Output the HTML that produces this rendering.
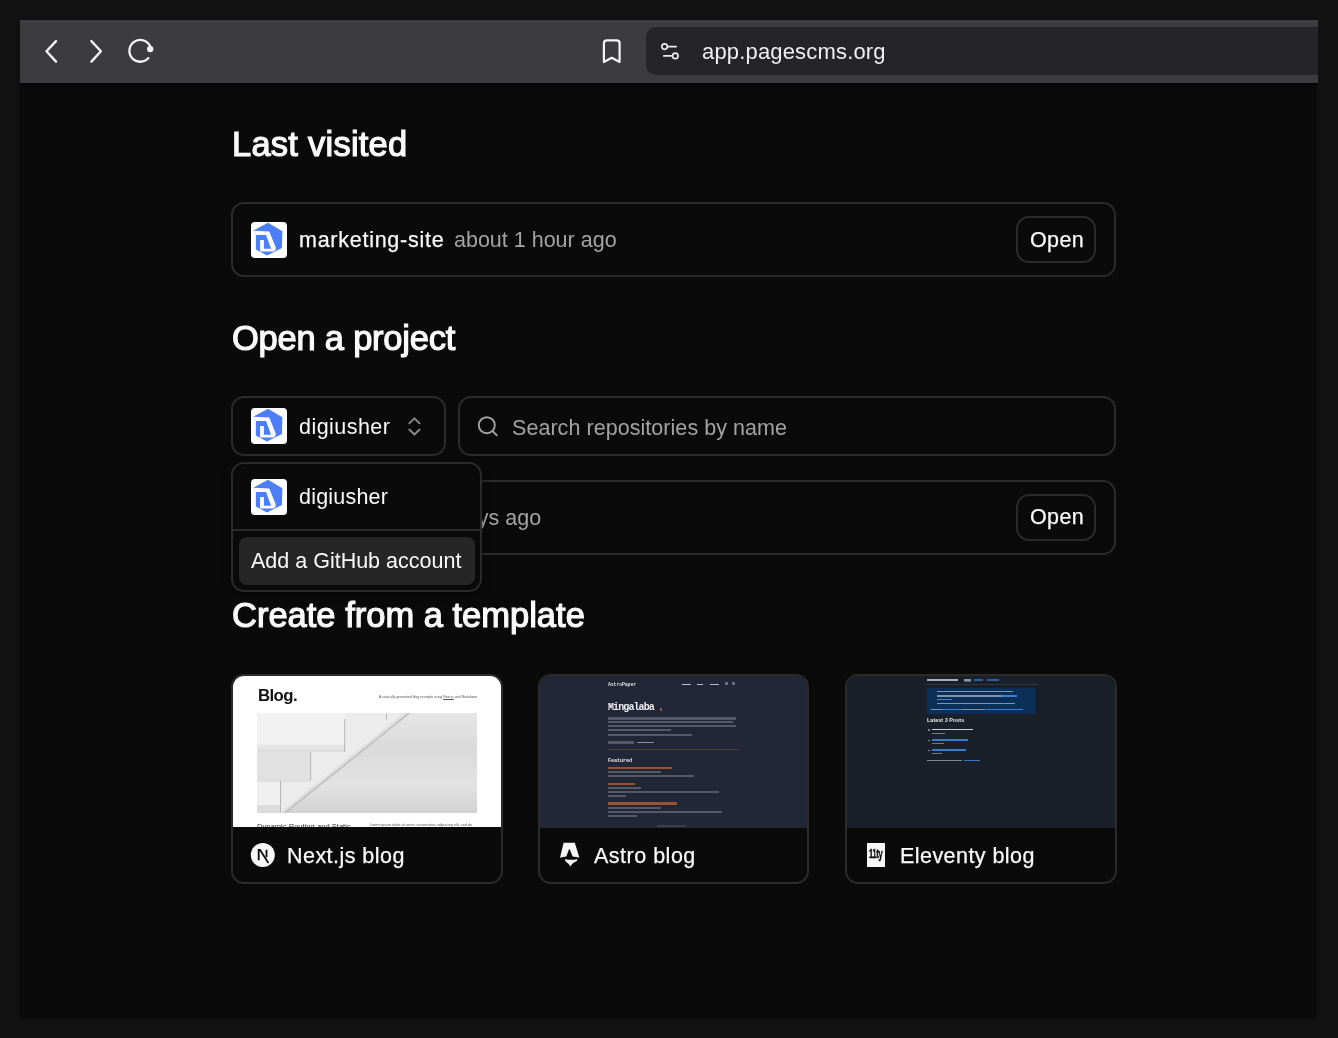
<!DOCTYPE html>
<html><head><meta charset="utf-8">
<style>
*{box-sizing:border-box;margin:0;padding:0}
html,body{width:1338px;height:1038px;overflow:hidden;background:#121213;font-family:"Liberation Sans",sans-serif;color:#fafafa}
.a{position:absolute}
.t{position:absolute;white-space:nowrap;line-height:1;will-change:transform}
.h{font-weight:400;font-size:34.5px;color:#fafafa;-webkit-text-stroke:1.2px #fafafa}
.b{font-size:21.5px;color:#fafafa}
.m{color:#a3a3a3}
.card{position:absolute;border:2px solid #2b2b2b;border-radius:13px;background:#0a0a0a}
.md{-webkit-text-stroke:0.25px #fafafa}
</style></head><body>
<!-- window -->
<div class="a" style="left:20px;top:20px;width:1298px;height:998px;background:#0f0f0f;box-shadow:0 0 4px rgba(0,0,0,.35)"></div>
<div class="a" style="left:20px;top:20px;width:1296px;height:998px;background:#0a0a0a"></div>
<!-- toolbar -->
<div class="a" style="left:20px;top:20px;width:1298px;height:63px;background:#3c3b3f"></div>
<div class="a" style="left:20px;top:20.5px;width:1298px;height:2.5px;background:#414043"></div>
<div class="a" style="left:20px;top:83px;width:1298px;height:1.6px;background:#050505"></div>
<svg class="a" style="left:0;top:0" width="700" height="90" viewBox="0 0 700 90">
  <path d="M56 41.1 L46.5 51.2 L56 61.6" fill="none" stroke="#f4f4f4" stroke-width="2.4" stroke-linecap="round" stroke-linejoin="round"/>
  <path d="M91.4 41.1 L100.9 51.2 L91.4 61.6" fill="none" stroke="#f4f4f4" stroke-width="2.4" stroke-linecap="round" stroke-linejoin="round"/>
  <path d="M148.4 58.1 A10.9 10.9 0 1 1 150.4 46.8" fill="none" stroke="#f4f4f4" stroke-width="2.3" stroke-linecap="round"/>
  <circle cx="150.2" cy="49.1" r="3.2" fill="#f4f4f4"/>
  <path d="M603.9 62 L603.9 43.2 Q603.9 40.3 606.8 40.3 L616.7 40.3 Q619.6 40.3 619.6 43.2 L619.6 62 L611.75 57.8 Z" fill="none" stroke="#f4f4f4" stroke-width="2.2" stroke-linejoin="round"/>
</svg>
<div class="a" style="left:645.5px;top:27.2px;width:700px;height:47.4px;background:#252428;border-radius:10.5px"></div>
<svg class="a" style="left:640px;top:30px" width="60" height="40" viewBox="640 30 60 40">
  <circle cx="664.6" cy="46.6" r="2.75" fill="none" stroke="#ececec" stroke-width="1.65"/>
  <path d="M667.6 46.6 H676.2" stroke="#ececec" stroke-width="1.7" stroke-linecap="round"/>
  <circle cx="675.3" cy="55.9" r="2.75" fill="none" stroke="#ececec" stroke-width="1.65"/>
  <path d="M663.8 55.9 H672.3" stroke="#ececec" stroke-width="1.7" stroke-linecap="round"/>
</svg>
<div class="t" style="left:702px;top:40.5px;font-size:22px;letter-spacing:0.17px;color:#efefef">app.pagescms.org</div>
<!-- right edge outer bg -->
<div class="a" style="left:1318px;top:0;width:20px;height:1038px;background:#121213"></div>

<!-- Last visited -->
<div class="t h" style="left:232px;top:126.6px;letter-spacing:0.24px">Last visited</div>
<div class="card" style="left:231px;top:202px;width:885px;height:75px"></div>
<svg class="a" style="left:251px;top:222px" width="36" height="36" viewBox="0 0 36 36"><use href="#logo"/></svg>
<div class="t b md" style="left:299px;top:229.9px;letter-spacing:0.74px">marketing-site</div>
<div class="t b m" style="left:454.3px;top:229.9px">about 1 hour ago</div>
<div class="card" style="left:1016px;top:216px;width:80px;height:47px"></div>
<div class="t b md" style="left:1030px;top:229.9px;letter-spacing:0.35px">Open</div>

<!-- Open a project -->
<div class="t h" style="left:232px;top:320.6px;letter-spacing:-0.23px">Open a project</div>
<div class="card" style="left:231px;top:396px;width:215px;height:60px"></div>
<svg class="a" style="left:251px;top:408px" width="36" height="36" viewBox="0 0 36 36"><use href="#logo"/></svg>
<div class="t b" style="left:299.1px;top:416.9px;letter-spacing:0.45px">digiusher</div>
<svg class="a" style="left:400px;top:410px" width="30" height="30" viewBox="400 410 30 30">
  <path d="M409.3 423.3 L414.4 418.3 L419.6 423.3 M409.3 429.5 L414.4 434.5 L419.6 429.5" fill="none" stroke="#8c8c8c" stroke-width="1.8" stroke-linecap="round" stroke-linejoin="round"/>
</svg>
<div class="card" style="left:458px;top:396px;width:658px;height:60px"></div>
<svg class="a" style="left:470px;top:410px" width="36" height="36" viewBox="470 410 36 36">
  <circle cx="486.8" cy="425.2" r="8" fill="none" stroke="#a3a3a3" stroke-width="1.9"/>
  <path d="M492.6 431 L496.8 435.3" stroke="#a3a3a3" stroke-width="1.9" stroke-linecap="round"/>
</svg>
<div class="t b m" style="left:512.4px;top:417.6px;letter-spacing:0.05px">Search repositories by name</div>

<!-- second repo card (under dropdown) -->
<div class="card" style="left:231px;top:480px;width:885px;height:75px"></div>
<div class="t b m" style="left:436px;top:507.5px">4 days ago</div>
<div class="card" style="left:1016px;top:494px;width:80px;height:47px"></div>
<div class="t b md" style="left:1030px;top:506.8px;letter-spacing:0.35px">Open</div>

<!-- dropdown -->
<div class="card" style="left:231px;top:462px;width:251px;height:130px;box-shadow:0 4px 10px rgba(0,0,0,.3)"></div>
<svg class="a" style="left:251px;top:479px" width="36" height="36" viewBox="0 0 36 36"><use href="#logo"/></svg>
<div class="t b" style="left:299.1px;top:486.7px;letter-spacing:0.2px">digiusher</div>
<div class="a" style="left:233px;top:529.2px;width:247px;height:1.6px;background:#2a2a2a"></div>
<div class="a" style="left:239px;top:537px;width:236px;height:48px;background:#262626;border-radius:8px"></div>
<div class="t b" style="left:251px;top:551.1px">Add a GitHub account</div>

<!-- Create from template -->
<div class="t h" style="left:232px;top:598.1px;letter-spacing:0px">Create from a template</div>

<!-- card 1: Next.js -->
<div class="card" style="left:231px;top:674px;width:272px;height:210px;overflow:hidden">
  <div class="a" style="left:0;top:0;width:268px;height:151px;background:#fff;overflow:hidden">
    <div class="t" style="left:24.5px;top:11.8px;font-size:16.8px;font-weight:700;color:#111;letter-spacing:-0.6px">Blog.</div>
    <div class="t" style="left:145.5px;top:19.8px;font-size:3.45px;color:#555">A statically generated blog example using <u>Next.js</u> and Markdown.</div>
    <svg class="a" style="left:23.8px;top:36.9px" width="220" height="100" viewBox="0 0 220 100">
      <defs>
        <linearGradient id="wall" x1="0" y1="0" x2="0" y2="1">
          <stop offset="0" stop-color="#e6e6e6"/><stop offset="0.35" stop-color="#dadada"/>
          <stop offset="0.72" stop-color="#e2e2e2"/><stop offset="1" stop-color="#d2d2d2"/>
        </linearGradient>
        <linearGradient id="sh1" x1="0" y1="0" x2="0" y2="1">
          <stop offset="0" stop-color="#e8e8e8"/><stop offset="1" stop-color="#dcdcdc"/>
        </linearGradient>
      </defs>
      <rect x="0" y="0" width="220" height="100" fill="url(#wall)"/>
      <path d="M0 0 L147 0 L25.4 100 L0 100 Z" fill="#ececec"/>
      <rect x="0" y="0" width="87.7" height="33" fill="#f2f2f2"/>
      <rect x="0" y="31.5" width="87.7" height="7.5" fill="url(#sh1)"/>
      <rect x="0" y="39" width="53.7" height="28" fill="#e1e1e1"/>
      <rect x="0" y="66" width="53.7" height="3" fill="#dedede"/>
      <rect x="0" y="69" width="23.5" height="23" fill="#efefef"/>
      <rect x="0" y="92" width="23.5" height="8" fill="#dcdcdc"/>
      <path d="M87.7 6 V39 M53.7 39 V67 M23.5 68 V100 M129.5 1.3 V6.5" stroke="#a8a8a8" stroke-width="0.8"/>
      <path d="M147 0 L152 0 L27.5 100 L22.5 100 Z" fill="#e0e0e0"/>
      <path d="M151 0 L153.5 0 L29 100 L26.5 100 Z" fill="#bdbdbd"/>
    </svg>
    <div class="t" style="left:24px;top:146.5px;font-size:7.6px;color:#333;letter-spacing:0px">Dynamic Routing and Static</div>
    <div class="t" style="left:137px;top:148px;font-size:3.7px;color:#555">Lorem ipsum dolor sit amet, consectetur adipiscing elit, sed do</div>
  </div>
</div>
<!-- card 2: Astro -->
<div class="card" style="left:538px;top:674px;width:271px;height:210px;overflow:hidden">
<div class="a" style="left:0;top:0;width:268px;height:152px;background:#212737;overflow:hidden;font-family:'Liberation Mono',monospace">
<div class="t" style="left:68.2px;top:6.8px;font-size:5px;font-weight:700;color:#d8dbe2;letter-spacing:-0.2px">AstroPaper</div>
<div class="a" style="left:142px;top:7.50px;width:8.8px;height:1.4px;background:#b9bdc6"></div>
<div class="a" style="left:157px;top:7.50px;width:6.3px;height:1.4px;background:#b9bdc6"></div>
<div class="a" style="left:170px;top:7.50px;width:8.6px;height:1.4px;background:#b9bdc6"></div>
<div class="a" style="left:184.6px;top:6.3px;width:3px;height:3px;border:0.8px solid #b9bdc6;border-radius:50%"></div>
<div class="a" style="left:192.4px;top:6.3px;width:3px;height:3px;border:0.8px solid #b9bdc6;border-radius:50%"></div>
<div class="t" style="left:68px;top:27px;font-size:10px;font-weight:700;color:#eceef2;letter-spacing:-0.9px">Mingalaba</div>
<div class="a" style="left:120px;top:32.35px;width:2px;height:2.3px;background:#9a5232"></div>
<div class="a" style="left:68.2px;top:41.35px;width:127.6px;height:2.3px;background:#545967"></div>
<div class="a" style="left:68.2px;top:45.15px;width:125.3px;height:2.3px;background:#545967"></div>
<div class="a" style="left:68.2px;top:48.95px;width:127.6px;height:2.3px;background:#545967"></div>
<div class="a" style="left:68.2px;top:52.85px;width:62.8px;height:2.3px;background:#545967"></div>
<div class="a" style="left:68.2px;top:57.95px;width:83.7px;height:2.3px;background:#545967"></div>
<div class="a" style="left:68.2px;top:65.45px;width:25.8px;height:2.3px;background:#545967"></div>
<div class="a" style="left:97px;top:65.70px;width:17.2px;height:1.8px;background:#8a8f9b"></div>
<div class="a" style="left:68.2px;top:72.55px;width:130.8px;height:1.1px;background:#4e3a36"></div>
<div class="t" style="left:68.2px;top:82.6px;font-size:5.2px;font-weight:700;color:#e4e6eb;letter-spacing:-0.1px">Featured</div>
<div class="a" style="left:68.2px;top:90.75px;width:63.8px;height:2.3px;background:#9a5232"></div>
<div class="a" style="left:68.2px;top:95.15px;width:53.3px;height:2.3px;background:#545967"></div>
<div class="a" style="left:68.2px;top:98.95px;width:85.7px;height:2.3px;background:#545967"></div>
<div class="a" style="left:68.2px;top:106.85px;width:27.2px;height:2.3px;background:#9a5232"></div>
<div class="a" style="left:68.2px;top:111.05px;width:32.4px;height:2.3px;background:#545967"></div>
<div class="a" style="left:68.2px;top:114.85px;width:110.8px;height:2.3px;background:#545967"></div>
<div class="a" style="left:68.2px;top:118.75px;width:17.8px;height:2.3px;background:#545967"></div>
<div class="a" style="left:68.2px;top:126.35px;width:69.0px;height:2.3px;background:#9a5232"></div>
<div class="a" style="left:68.2px;top:130.95px;width:53.3px;height:2.3px;background:#545967"></div>
<div class="a" style="left:68.2px;top:134.65px;width:114.0px;height:2.3px;background:#545967"></div>
<div class="a" style="left:68.2px;top:138.65px;width:29.3px;height:2.3px;background:#545967"></div>
<div class="a" style="left:117px;top:149.15px;width:29.0px;height:1.5px;background:#3a4050"></div>
</div></div>
<!-- card 3: Eleventy -->
<div class="card" style="left:844.5px;top:674px;width:272px;height:210px;overflow:hidden">
<div class="a" style="left:0;top:0;width:268px;height:152px;background:#19202a;overflow:hidden">
<div class="a" style="left:80.3px;top:3.25px;width:31.3px;height:1.5px;background:#a9aeb6"></div>
<div class="a" style="left:117.6px;top:3.35px;width:6.6px;height:1.3px;background:#8a94a2"></div>
<div class="a" style="left:117.6px;top:5.30px;width:6.6px;height:0.6px;background:#5a6472"></div>
<div class="a" style="left:127px;top:3.35px;width:9.4px;height:1.3px;background:#2f5f98"></div>
<div class="a" style="left:140px;top:3.35px;width:12.6px;height:1.3px;background:#2f5f98"></div>
<div class="a" style="left:80.3px;top:7.70px;width:111.0px;height:1px;background:#2d3642"></div>
<div class="a" style="left:80.3px;top:11.8px;width:108px;height:26.2px;background:#0c2f58"></div>
<div class="a" style="left:90px;top:14.85px;width:76.5px;height:1.3px;background:#7f93ad"></div>
<div class="a" style="left:90px;top:19.45px;width:65.0px;height:1.3px;background:#7f93ad"></div>
<div class="a" style="left:155.5px;top:19.45px;width:14.5px;height:1.3px;background:#3a82d6"></div>
<div class="a" style="left:90px;top:22.85px;width:15.7px;height:1.3px;background:#3a82d6"></div>
<div class="a" style="left:90px;top:26.85px;width:78.0px;height:1.3px;background:#7f93ad"></div>
<div class="a" style="left:84px;top:33.15px;width:11.0px;height:1.3px;background:#7f93ad"></div>
<div class="a" style="left:95.5px;top:33.15px;width:19.5px;height:1.3px;background:#3a82d6"></div>
<div class="a" style="left:115.5px;top:33.15px;width:22.5px;height:1.3px;background:#7f93ad"></div>
<div class="a" style="left:139px;top:33.15px;width:37.0px;height:1.3px;background:#3a82d6"></div>
<div class="t" style="left:80.5px;top:42.2px;font-size:5.6px;font-weight:700;color:#e3e6ea;letter-spacing:-0.05px">Latest 3 Posts</div>
<div class="a" style="left:81.5px;top:53.40px;width:2.3px;height:1.2px;background:#7d8794"></div>
<div class="a" style="left:85.3px;top:52.80px;width:41.0px;height:1.6px;background:#c9ced6"></div>
<div class="a" style="left:81.5px;top:64.00px;width:2.3px;height:1.2px;background:#7d8794"></div>
<div class="a" style="left:85.3px;top:63.40px;width:36.4px;height:1.6px;background:#3a7bc8"></div>
<div class="a" style="left:81.5px;top:74.00px;width:2.3px;height:1.2px;background:#7d8794"></div>
<div class="a" style="left:85.3px;top:73.40px;width:34.3px;height:1.6px;background:#3a7bc8"></div>
<div class="a" style="left:85.3px;top:56.80px;width:13.7px;height:1.2px;background:#6f7985"></div>
<div class="a" style="left:85.3px;top:67.00px;width:12.3px;height:1.2px;background:#6f7985"></div>
<div class="a" style="left:85.3px;top:77.00px;width:10.2px;height:1.2px;background:#6f7985"></div>
<div class="a" style="left:80.3px;top:83.90px;width:35.7px;height:1.2px;background:#7d8794"></div>
<div class="a" style="left:117px;top:83.90px;width:16.0px;height:1.2px;background:#3a7bc8"></div>
</div></div>
<!-- template icons -->
<svg class="a" style="left:250px;top:842px" width="26" height="26" viewBox="0 0 26 26">
  <circle cx="12.8" cy="13" r="12" fill="#f8f8f8"/>
  <path d="M8.7 18.3 V7.8 H10 L18.4 21" fill="none" stroke="#0a0a0a" stroke-width="1.8"/>
  <path d="M16.5 7.8 V15.2" stroke="#0a0a0a" stroke-width="1.8"/>
</svg>
<svg class="a" style="left:558px;top:841px" width="24" height="28" viewBox="0 0 24 28">
  <path d="M5.6 1.8 H16.8 L21.4 16.8 Q18 15.6 14.6 15.4 L11.9 8.6 Q11.4 7.8 10.9 8.6 L8.3 15.4 Q5 15.6 2 16.8 Z" fill="#f6f6f6"/>
  <path d="M6.9 17.9 Q12.6 19.6 19.5 17.9 Q19.4 20.4 17 21 Q14.4 21.8 12.3 25.4 Q11 22.2 8.8 21.4 Q6.9 20.6 6.9 17.9 Z" fill="#f6f6f6"/>
</svg>
<div class="a" style="left:867.2px;top:842.8px;width:18px;height:24.2px;background:#f6f6f6"></div>
<div class="t" style="left:869px;top:847.8px;font-size:12px;font-weight:700;color:#111;letter-spacing:-0.5px;-webkit-text-stroke:0.5px #111;transform:scaleX(0.62);transform-origin:0 0">11ty</div>
<div class="t b md" style="left:287px;top:845.5px;letter-spacing:0.46px">Next.js blog</div>
<div class="t b md" style="left:593.5px;top:845.5px;letter-spacing:0.5px">Astro blog</div>
<div class="t b md" style="left:900px;top:845.5px;letter-spacing:0.44px">Eleventy blog</div>

<svg width="0" height="0" style="position:absolute">
  <defs>
    <g id="logo">
      <rect x="0" y="0" width="36" height="36" rx="3.8" fill="#fdfdfd"/>
      <path d="M17 0.8 L31.4 9.3 L30.9 26.1 L16 33.6 L4.9 27.4 L4.9 13.1 L2.3 8.7 Z" fill="#4c7ff6"/>
      <path d="M2.3 8.7 L18.3 9.5 L24.6 25 Q25.6 29.4 21.3 29.4 L9.1 29.4 L9.1 18 L12.9 18 L12.9 26.7 L20.1 26.7 L15.1 13.1 L4.9 13.1 Z" fill="#fdfdfd"/>
    </g>
  </defs>
</svg>
</body></html>
